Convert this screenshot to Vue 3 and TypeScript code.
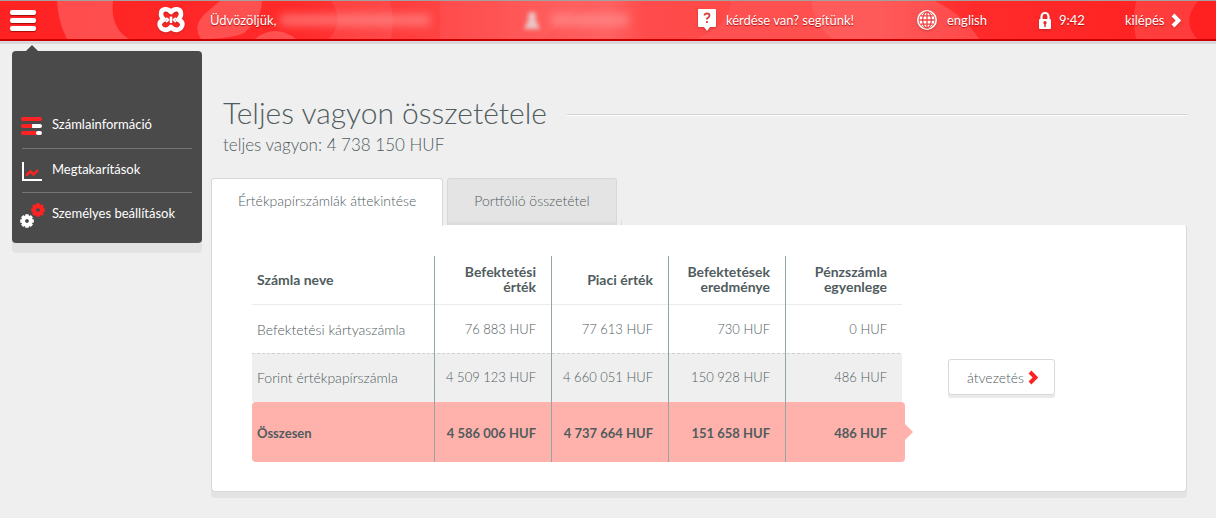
<script setup lang="ts">
import { ref } from 'vue'

interface Account {
  name: string
  values: string[]
}

const activeTab = ref(0)
const tabs: string[] = ['Értékpapírszámlák áttekintése', 'Portfólió összetétel']
const menu = [
  { id: 'accounts', label: 'Számlainformáció' },
  { id: 'savings', label: 'Megtakarítások' },
  { id: 'settings', label: 'Személyes beállítások' },
]
const headings: string[] = ['Befektetési érték', 'Piaci érték', 'Befektetések eredménye', 'Pénzszámla egyenlege']
const accounts: Account[] = [
  { name: 'Befektetési kártyaszámla', values: ['76 883 HUF', '77 613 HUF', '730 HUF', '0 HUF'] },
  { name: 'Forint értékpapírszámla', values: ['4 509 123 HUF', '4 660 051 HUF', '150 928 HUF', '486 HUF'] },
]
const totals: string[] = ['4 586 006 HUF', '4 737 664 HUF', '151 658 HUF', '486 HUF']
const teeth: number[] = [0, 45, 90, 135, 180, 225, 270, 315]
</script>

<template>
  <div class="page">
    <header class="topbar">
      <svg class="decor" viewBox="0 0 1216 38" preserveAspectRatio="none" aria-hidden="true">
        <defs>
          <linearGradient id="glow">
            <stop offset="0" stop-color="#ff2222" />
            <stop offset=".24" stop-color="#ff2a2a" />
            <stop offset=".42" stop-color="#ff5050" />
            <stop offset=".5" stop-color="#ff6262" />
            <stop offset=".53" stop-color="#ff4b4b" />
            <stop offset=".72" stop-color="#ff4646" />
            <stop offset=".8" stop-color="#ff2b2b" />
            <stop offset="1" stop-color="#ff2020" />
          </linearGradient>
        </defs>
        <rect width="1216" height="38" fill="url(#glow)" />
        <g fill="#ff8080" fill-opacity=".45">
          <path d="M57 0H113Q110 27 129 38H67Q58 20 57 0Z" />
          <path d="M220 0H262Q262 17 244 32Q230 38 201 38Q191 24 208 10Z" />
          <path d="M255 38Q275 22 296 38Z" />
          <path d="M331 0H390Q395 20 391 38H329Q345 20 331 0Z" fill-opacity=".2" />
          <path d="M588 0L543 38H440V0Z" fill-opacity=".12" />
          <path d="M695 38Q730 25 731 0H811Q815 27 832 38Z" fill-opacity=".15" />
          <path d="M811 0H935Q965 15 979 38H832Q815 26 811 0Z" fill-opacity=".35" />
          <path d="M1136 0H1198Q1181 20 1197 38H1136Q1132 20 1136 0Z" fill-opacity=".28" />
        </g>
      </svg>
      <div class="cell menu-cell">
        <button class="burger" type="button" aria-label="Menü"><i></i><i></i><i></i></button>
      </div>
      <a class="cell" href="#" aria-label="Kezdőlap">
        <svg class="drop" width="28" height="28" viewBox="0 0 28 28" fill="none" stroke="#fff" stroke-width="4.600" stroke-linejoin="round">
          <path d="M14 6C11 2 4 2 4 8C4 11 5 12 7 13.500C3 15 2 17 3 20C5 25 11 25 14 21C17 25 23 25 25 20C26 17 25 15 21 13.500C23 12 24 11 24 8C24 2 17 2 14 6Z" />
          <path d="M14 10.500V17" stroke-width="2.600" />
          <path d="M9 12L11.500 13.800L9 16M19 12L16.500 13.800L19 16" stroke-width="2" />
        </svg>
      </a>
      <div class="cell greeting">Üdvözöljük, <span class="hidden-name"></span></div>
      <div class="cell person">
        <svg class="soft" width="18" height="20" viewBox="0 0 18 20" fill="#eac6c6"><circle cx="9" cy="6" r="4" /><path d="M1 19L6 8H12L17 19Z" /></svg>
        <span class="hidden-name short"></span>
      </div>
      <a class="cell help" href="#">
        <svg class="drop" width="18" height="24" viewBox="0 0 18 24"><path d="M1 1H17Q18 1 18 2V18Q18 19 17 19H12L9 23L6 19H1Q0 19 0 18V2Q0 1 1 1Z" fill="#fff" /><path d="M6.500 7.500Q6.500 5.500 9 5.500Q11.500 5.500 11.500 7.500Q11.500 9 9 10.500V11.500M9 13V15" fill="none" stroke="#d84040" stroke-width="1.800" /></svg>
        kérdése van? segítünk!
      </a>
      <a class="cell language" href="#">
        <svg class="drop" width="20" height="20" viewBox="0 0 20 20"><circle cx="10" cy="10" r="10" fill="#fff" /><g fill="none" stroke="#f04040" stroke-width="1.300"><ellipse cx="10" cy="10" rx="4.300" ry="8.200" /><ellipse cx="10" cy="10" rx="8" ry="8.200" stroke-width=".8" /><path d="M10 2V18M2 10H18M3.500 5.800H16.500M3.500 14.200H16.500" /></g></svg>
        english
      </a>
      <div class="cell clock">
        <svg class="drop" width="12" height="17" viewBox="0 0 12 17"><path d="M2.500 8V4.500A3.500 3.500 0 0 1 9.500 4.500V8" fill="none" stroke="#fff" stroke-width="2.200" /><rect y="7" width="12" height="10" rx="1" fill="#fff" /><circle cx="6" cy="10.800" r="1.700" fill="#e03030" /><path d="M6 11V15" stroke="#e03030" stroke-width="1.500" /></svg>
        9:42
      </div>
      <a class="cell logout" href="#">
        kilépés
        <svg class="drop" width="10" height="15" viewBox="0 0 10 15"><path d="M2 2L7.500 7.500L2 13" fill="none" stroke="#fff" stroke-width="4" /></svg>
      </a>
    </header>

    <div class="body">
      <nav class="sidebar">
        <a v-for="item in menu" :key="item.id" href="#">
          <svg v-if="item.id === 'accounts'" width="26" height="26" viewBox="0 0 26 26" fill="none" stroke-width="4" stroke-linecap="round">
            <path d="M3 6H20M3 13H12M3 20H16" stroke="#ff2222" />
            <path d="M13 13H20M18 20H20" stroke="#fff" />
            <path d="M10 13H12M13 20H16" stroke="#ff2222" stroke-linecap="butt" />
          </svg>
          <svg v-else-if="item.id === 'savings'" width="26" height="26" viewBox="0 0 26 26" fill="none">
            <path d="M3 4V22H22" stroke="#fff" stroke-width="2" />
            <path d="M6 17.500L10.500 13.500L13.500 16.500L18 12" stroke="#ff2222" stroke-width="2.400" />
          </svg>
          <svg v-else width="26" height="26" viewBox="0 0 26 26">
            <g transform="translate(18 8)">
              <rect v-for="t in teeth" :key="t" x="-1.800" y="-6.800" width="3.600" height="4" rx=".6" fill="#ff2222" :transform="`rotate(${t})`" />
              <circle r="3.700" fill="none" stroke="#ff2222" stroke-width="3.600" />
            </g>
            <g transform="translate(7 19)">
              <rect v-for="t in teeth" :key="t" x="-1.800" y="-6.800" width="3.600" height="4" rx=".6" fill="#fff" :transform="`rotate(${t})`" />
              <circle r="3.700" fill="none" stroke="#fff" stroke-width="3.600" />
            </g>
          </svg>
          <span>{{ item.label }}</span>
        </a>
      </nav>

      <main>
        <div class="title"><h1>Teljes vagyon összetétele</h1></div>
        <p class="subtitle">teljes vagyon: 4 738 150 HUF</p>

        <div class="tabs" role="tablist">
          <button
            v-for="(tab, i) in tabs"
            :key="tab"
            type="button"
            role="tab"
            :aria-selected="activeTab === i"
            :class="{ active: activeTab === i }"
            @click="activeTab = i"
          >{{ tab }}</button>
        </div>

        <section class="card">
          <table>
            <colgroup><col class="name-col" /><col v-for="h in headings" :key="h" /></colgroup>
            <thead>
              <tr><th scope="col">Számla neve</th><th v-for="h in headings" :key="h" scope="col">{{ h }}</th></tr>
            </thead>
            <tbody>
              <tr v-for="account in accounts" :key="account.name">
                <th scope="row">{{ account.name }}</th>
                <td v-for="(value, i) in account.values" :key="i">{{ value }}</td>
              </tr>
            </tbody>
            <tfoot>
              <tr><th scope="row">Összesen</th><td v-for="(value, i) in totals" :key="i">{{ value }}</td></tr>
            </tfoot>
          </table>
          <div class="actions">
            <button class="transfer" type="button">
              átvezetés
              <svg width="10" height="15" viewBox="0 0 10 15"><path d="M2 2L7.500 7.500L2 13" fill="none" stroke="#ff2222" stroke-width="4" /></svg>
            </button>
          </div>
        </section>
      </main>
    </div>
  </div>
</template>

<style>
body {
  margin: 0;
  background: #efefef;
}
</style>

<style scoped>
.page {
  min-height: 100vh;
  background: #efefef;
  color: #505c5e;
  font-family: Lato, "Noto Sans", sans-serif;
  font-size: 13px;
  font-weight: 400;
}
* {
  box-sizing: border-box;
}
a {
  color: inherit;
  text-decoration: none;
}
button {
  font: inherit;
  color: inherit;
  cursor: pointer;
}
svg {
  flex: none;
}
.topbar {
  position: relative;
  display: grid;
  grid-template-columns: 157px 53px 313fr 175fr 219fr 122px 86px 91px;
  height: 41px;
  border-top: 1px solid #a3a0a0;
  border-bottom: 2px solid #cc0000;
  box-shadow: 0 3px #d8d8d8;
  background: #ff2222;
  color: #fff;
}
.decor {
  position: absolute;
  inset: 0;
  width: 100%;
  height: 100%;
}
.cell {
  position: relative;
  display: flex;
  align-items: center;
  gap: 10px;
  white-space: nowrap;
  text-shadow: 0 1px 1px #b01010;
}
.menu-cell {
  padding-left: 10px;
}
.burger {
  display: grid;
  gap: 3px;
  padding: 0;
  border: 0;
  background: none;
}
.burger i {
  width: 26px;
  height: 5px;
  border-radius: 2px;
  background: #fff;
  box-shadow: 0 1px 1px #a01010;
}
.drop {
  filter: drop-shadow(0 1px 1px #90202080);
}
.greeting {
  gap: 4px;
}
.clock {
  gap: 8px;
}
.logout {
  gap: 7px;
}
.hidden-name {
  width: 150px;
  height: 12px;
  border-radius: 4px;
  background: #ffa0a0;
  opacity: .5;
  filter: blur(4px);
}
.hidden-name.short {
  width: 78px;
}
.soft {
  filter: blur(2px);
}
.body {
  display: grid;
  grid-template-columns: 190px 1fr;
  gap: 9px;
  align-items: start;
  padding: 10px 29px 26px 12px;
}
.sidebar {
  position: relative;
  min-height: 192px;
  padding: 53px 10px 0;
  border-radius: 4px;
  background: #4a4a4a;
  box-shadow: 0 10px #e2e2e2;
  color: #fff;
}
.sidebar::before {
  content: "";
  position: absolute;
  left: 14px;
  top: -6px;
  border: solid transparent;
  border-width: 0 6px 6px;
  border-bottom-color: #4a4a4a;
}
.sidebar a {
  display: flex;
  align-items: center;
  gap: 6px;
  height: 44px;
}
.sidebar a + a {
  border-top: 1px solid #757575;
}
.sidebar svg {
  margin-left: -2px;
}
.sidebar span {
  padding-bottom: 4px;
}
.title {
  display: flex;
  align-items: center;
  gap: 20px;
  padding-left: 12px;
  margin-top: 43px;
}
.title::after {
  content: "";
  flex: 1;
  height: 2px;
  margin-top: 6px;
  margin-right: -1px;
  background: linear-gradient(#d3d3d3 50%, #fff 50%);
}
h1 {
  margin: 0;
  font-size: 30px;
  line-height: 36px;
  font-weight: 300;
}
.subtitle {
  margin: 4px 0 22px;
  padding-left: 12px;
  font-size: 17px;
  line-height: 22px;
  font-weight: 300;
}
.tabs {
  display: flex;
  gap: 4px;
}
.tabs::after {
  content: "";
  align-self: flex-end;
  width: 1px;
  height: 5px;
  background: #dcdcdc;
}
.tabs button {
  height: 47px;
  padding: 0 26px 4px;
  border: 1px solid #d8d8d8;
  border-bottom: 0;
  border-radius: 3px 3px 0 0;
  background: linear-gradient(#e4e4e4 43px, #dcdcdc 43px);
  font-size: 14px;
  font-weight: 300;
}
.tabs .active {
  position: relative;
  margin-bottom: -1px;
  height: 48px;
  background: #fff;
  z-index: 1;
}
.card {
  display: grid;
  grid-template-columns: 650fr 238fr;
  gap: 46px;
  padding: 30px 0 29px 40px;
  border: 1px solid #d8d8d8;
  border-top-color: #fff;
  border-radius: 0 3px 4px 4px;
  background: #fff;
  box-shadow: 0 6px #e3e3e3;
}
table {
  width: 100%;
  table-layout: fixed;
  border-collapse: separate;
  border-spacing: 0;
}
.name-col {
  width: 28%;
}
th, td {
  height: 49px;
  padding: 0 15px 0 5px;
  text-align: right;
  line-height: 15px;
}
th + th, td {
  border-left: 1px solid #95a5a3;
}
th:first-child {
  text-align: left;
}
thead th {
  padding-bottom: 3px;
  background: linear-gradient(#ebebeb, #ebebeb) bottom / 100% 1px no-repeat;
  font-size: 14px;
}
tbody th, tbody td {
  font-weight: 300;
}
tbody th {
  font-size: 14px;
}
tbody tr:first-child > * {
  height: 48px;
}
tbody tr + tr {
  background: repeating-linear-gradient(90deg, #d0d0d0 0 3px, #efefef 3px 5px) top / 100% 1px no-repeat #efefef;
}
tfoot th, tfoot td {
  height: 60px;
  padding-top: 2px;
  background: #ffb2ab;
  font-weight: 700;
}
tfoot th {
  border-radius: 4px 0 0 4px;
}
tfoot td:last-child {
  position: relative;
  border-radius: 0 4px 4px 0;
  box-shadow: 3px 0 #ffb2ab;
}
tfoot td:last-child::after {
  content: "";
  position: absolute;
  left: calc(100% + 3px);
  top: calc(50% - 8px);
  border: solid transparent;
  border-width: 8px 0 8px 8px;
  border-left-color: #ffb2ab;
}
.transfer {
  display: flex;
  align-items: center;
  gap: 4px;
  height: 36px;
  margin-top: 103px;
  padding: 0 16px 0 18px;
  border: 1px solid #d8d8d8;
  border-radius: 3px;
  background: #fff;
  box-shadow: 0 3px #e9eaea;
  font-size: 14px;
  font-weight: 300;
}
</style>
